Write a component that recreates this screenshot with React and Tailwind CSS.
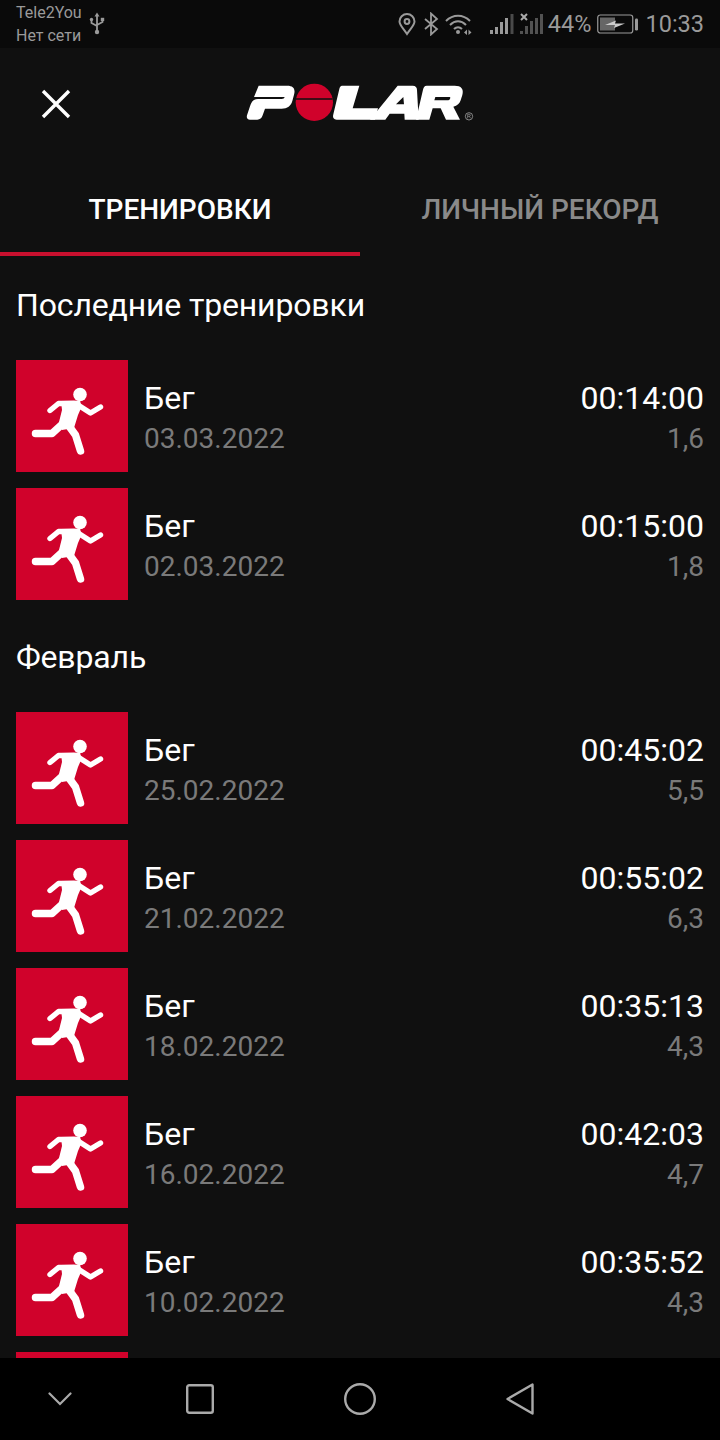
const font = { fontFamily: 'Roboto, sans-serif' };

function Runner() {
  return (
    <svg viewBox="0 0 112 112" className="w-[112px] h-[112px] shrink-0 bg-[#d0022b]">
      <circle cx="64" cy="34.5" r="6.8" fill="#fff" />
      <path d="M34 50.5 L42.5 43.5 L58 43.5 M62 45 L74.5 53 L84.5 47" fill="none" stroke="#fff" strokeWidth="5.4" strokeLinecap="round" strokeLinejoin="round" />
      <path d="M45 41 L64 40.5 L65.5 47 L62 55 L58 68 L46 70 L43 62 L46 50 Z" fill="#fff" />
      <path d="M47.5 63 L36 73.5 L19.5 73.5" fill="none" stroke="#fff" strokeWidth="7.5" strokeLinecap="round" strokeLinejoin="round" />
      <path d="M50 62 L59.5 75 L64.5 91" fill="none" stroke="#fff" strokeWidth="7.5" strokeLinecap="round" strokeLinejoin="round" />
    </svg>
  );
}

function Row({ date, time, dist }) {
  return (
    <div className="flex h-[112px] mb-4 items-start">
      <Runner />
      <div className="flex-1 pl-4 flex flex-col pt-[18px]">
        <div className="text-[32px] leading-[40px] text-white">Бег</div>
        <div className="text-[28px] leading-[40px] mt-px text-[#7a7a7a]">{date}</div>
      </div>
      <div className="flex flex-col items-end pt-[18px]">
        <div className="text-[32px] leading-[40px] text-white">{time}</div>
        <div className="text-[28px] leading-[40px] mt-px text-[#7a7a7a]">{dist}</div>
      </div>
    </div>
  );
}

function Section({ title, children }) {
  return (
    <div>
      <div className="h-24 pt-[21px] text-[32px] leading-[40px] tracking-[-0.15px] text-white">{title}</div>
      {children}
    </div>
  );
}

function StatusLeft() {
  return (
    <div className="flex items-center text-[#9a9a9a]">
      <div className="text-[16px] leading-[23px]">
        <div>Tele2You</div>
        <div>Нет сети</div>
      </div>
      <svg viewBox="0 0 16 24" className="w-4 h-6 ml-[7px]" fill="none" stroke="#9a9a9a" strokeWidth="1.8">
        <path d="M8 2 V20 M2.5 8 V11 L8 14 M13.5 8 V10 L8 13" />
        <path d="M8 0.5 L10.5 4.5 H5.5 Z" fill="#9a9a9a" stroke="none" />
        <circle cx="8" cy="20" r="2.2" fill="#9a9a9a" stroke="none" />
        <circle cx="2.5" cy="7.5" r="1.7" fill="#9a9a9a" stroke="none" />
        <rect x="11.8" y="5.8" width="3.4" height="3.2" fill="#9a9a9a" stroke="none" />
      </svg>
    </div>
  );
}

function StatusRight() {
  const c = '#9a9a9a';
  return (
    <div className="flex items-center text-[#9a9a9a]">
      <svg viewBox="1 0 18 24" className="w-5 h-6" fill="none" stroke={c} strokeWidth="2">
        <path d="M10 22 C6 16 2.5 13 2.5 9.5 A7.5 7.5 0 0 1 17.5 9.5 C17.5 13 14 16 10 22 Z" />
        <circle cx="10" cy="9.5" r="2.4" />
      </svg>
      <svg viewBox="0 0 16 24" className="w-4 h-6 ml-[6px]" fill="none" stroke={c} strokeWidth="1.8">
        <path d="M2 7 L14 17 L8 22.5 V1.5 L14 7 L2 17" />
      </svg>
      <svg viewBox="0 0 30 24" className="w-[30px] h-6 ml-[5px]" fill="none" stroke={c} strokeWidth="2">
        <path d="M2 9 C9 2 19 2 26 9 M6 13 C11 8 17 8 22 13 M10 17 C12.5 14.5 15.5 14.5 18 17" />
        <circle cx="14" cy="20" r="2" fill={c} stroke="none" />
        <path d="M20 20.5 L23 17.5 V23 Z M24.5 17.5 V23 L27.5 20.5 Z" fill={c} stroke="none" />
      </svg>
      <svg viewBox="0 0 24 24" className="w-6 h-6 ml-[16px]" fill={c}>
        <rect x="0" y="18" width="3" height="4" />
        <rect x="5" y="15" width="3" height="7" />
        <rect x="10" y="10" width="3" height="12" />
        <rect x="15" y="6" width="3" height="16" />
        <rect x="20.5" y="2" width="3" height="20" opacity="0.45" />
      </svg>
      <svg viewBox="0 0 24 24" className="w-6 h-6 ml-[6px]" fill={c}>
        <path d="M1 2 L7 8 M7 2 L1 8" stroke="#aaa" strokeWidth="2" />
        <rect x="0" y="19" width="3" height="3" opacity="0.5" />
        <rect x="5" y="14" width="3" height="8" opacity="0.5" />
        <rect x="10" y="9" width="3" height="13" opacity="0.5" />
        <rect x="15" y="6" width="3" height="16" opacity="0.5" />
        <rect x="20" y="2" width="3" height="20" opacity="0.5" />
      </svg>
      <span className="text-[23.5px] leading-[48px] ml-[4px]">44%</span>
      <svg viewBox="0 0 42 20" className="w-[42px] h-5 ml-[6px]" fill="none">
        <rect x="0.75" y="1" width="35" height="18" rx="2.5" stroke={c} strokeWidth="1.2" />
        <rect x="3" y="3.5" width="15" height="13" fill="#666" />
        <path d="M8 11 L19 6.5 L18 9.5 L28 9.5 L17 14 L18 11 Z" fill="#ccc" />
        <rect x="38" y="4.5" width="3" height="12" rx="1.2" fill={c} />
      </svg>
      <span className="text-[23.5px] leading-[48px] ml-[6px]">10:33</span>
    </div>
  );
}

function Logo() {
  return (
    <svg viewBox="0 0 780 210" className="w-[260px] h-[70px] block">
      <g fill="#fff">
        <path d="M86 50 H172 C190 50 197 60 192 77 L187 96 C183 111 172 119 155 119 H105 L98 139 C95 148 90 152 82 152 H60 C52 152 49 147 51 139 L60 112 C64 98 71 90 84 90 H155 C160 90 163 88 164 84 H72 Z" />
        <path d="M336 50 H388 L368 118 H444 L435 152 H320 C312 152 307 147 310 136 L328 60 C329 54 332 50 336 50 Z" />
        <path d="M503 50 H548 C557 50 561 55 561 63 L566 152 H524 L523 134 H479 L466 152 H420 Z M520 84 L498 106 H522 Z" fillRule="evenodd" />
        <path d="M590 50 H674 C694 50 702 60 697 78 L692 94 C689 104 682 110 670 113 L690 152 H648 L632 118 H608 L598 152 H558 L579 62 C581 54 584 50 590 50 Z M616 84 L613 94 H652 C656 94 659 92 660 89 L661 87 C661 85 660 84 657 84 Z" fillRule="evenodd" />
      </g>
      <circle cx="253" cy="100" r="56" fill="#d0022b" />
      <path d="M196 90 H308" stroke="#111" strokeWidth="5" />
      <circle cx="717" cy="142" r="11" fill="none" stroke="#bbb" strokeWidth="2" />
      <path d="M713 148 V136 H718 A3 3 0 0 1 718 142 H713 M718 142 L722 148" fill="none" stroke="#bbb" strokeWidth="1.6" />
    </svg>
  );
}

export default function App() {
  return (
    <div className="w-[720px] h-[1440px] flex flex-col bg-[#101010] overflow-hidden" style={font}>
      <div className="h-12 shrink-0 bg-[#0a0a0a] flex items-center justify-between px-4">
        <StatusLeft />
        <StatusRight />
      </div>
      <div className="h-[112px] shrink-0 relative flex items-center justify-center">
        <svg viewBox="0 0 32 32" className="absolute left-10 top-[40px] w-8 h-8" fill="none" stroke="#fff" strokeWidth="3.4">
          <path d="M3 3 L29 29 M29 3 L3 29" />
        </svg>
        <Logo />
      </div>
      <div className="h-24 shrink-0 flex">
        <div className="w-[360px] flex items-center justify-center pt-[8px] border-b-4 border-[#c8102e] text-[28px] font-medium text-white">ТРЕНИРОВКИ</div>
        <div className="w-[360px] flex items-center justify-center pt-[8px] border-b-4 border-transparent text-[28px] font-medium text-[#8a8a8a]">ЛИЧНЫЙ РЕКОРД</div>
      </div>
      <div className="flex-1 min-h-0 overflow-hidden px-4 pt-2">
        <Section title="Последние тренировки">
          <Row date="03.03.2022" time="00:14:00" dist="1,6" />
          <Row date="02.03.2022" time="00:15:00" dist="1,8" />
        </Section>
        <Section title="Февраль">
          <Row date="25.02.2022" time="00:45:02" dist="5,5" />
          <Row date="21.02.2022" time="00:55:02" dist="6,3" />
          <Row date="18.02.2022" time="00:35:13" dist="4,3" />
          <Row date="16.02.2022" time="00:42:03" dist="4,7" />
          <Row date="10.02.2022" time="00:35:52" dist="4,3" />
          <div className="h-[6px] bg-[#d0022b] w-[112px]" />
        </Section>
      </div>
      <div className="h-[82px] shrink-0 bg-black flex items-center pl-12">
        <svg viewBox="0 0 24 14" className="w-6 h-[14px]" fill="none" stroke="#aaa" strokeWidth="2.2" strokeLinecap="round">
          <path d="M1.5 1.5 L12 12 L22.5 1.5" />
        </svg>
        <svg viewBox="0 0 28 30" className="w-7 h-[30px] ml-[114px]" fill="none" stroke="#aaa" strokeWidth="2.4">
          <rect x="1.2" y="1.2" width="25.6" height="27.6" rx="2" />
        </svg>
        <svg viewBox="0 0 32 32" className="w-8 h-8 ml-[130px]" fill="none" stroke="#aaa" strokeWidth="2.4">
          <circle cx="16" cy="16" r="14.8" />
        </svg>
        <svg viewBox="0 0 28 32" className="w-7 h-8 ml-[130px]" fill="none" stroke="#aaa" strokeWidth="2.4" strokeLinejoin="round">
          <path d="M26.5 1.5 V30.5 L1.5 16 Z" />
        </svg>
      </div>
    </div>
  );
}
